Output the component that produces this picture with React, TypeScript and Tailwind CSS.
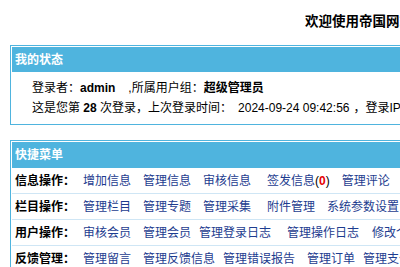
const FONT = "font-['Liberation_Sans','Noto_Sans_CJK_SC',sans-serif]";

type Link = { text: string; cls: string; badge?: boolean };

const MENU: { label: string; links: Link[] }[] = [
  {
    label: "信息操作：",
    links: [
      { text: "增加信息", cls: "" },
      { text: "管理信息", cls: "ml-[12px]" },
      { text: "审核信息", cls: "ml-[12px]" },
      { text: "签发信息", cls: "ml-[16px]", badge: true },
      { text: "管理评论", cls: "ml-[12px]" },
    ],
  },
  {
    label: "栏目操作：",
    links: [
      { text: "管理栏目", cls: "" },
      { text: "管理专题", cls: "ml-[12px]" },
      { text: "管理采集", cls: "ml-[12px]" },
      { text: "附件管理", cls: "ml-[16px]" },
      { text: "系统参数设置", cls: "ml-[12px]" },
    ],
  },
  {
    label: "用户操作：",
    links: [
      { text: "审核会员", cls: "" },
      { text: "管理会员", cls: "ml-[12px]" },
      { text: "管理登录日志", cls: "ml-[8px]" },
      { text: "管理操作日志", cls: "ml-[16px]" },
      { text: "修改个人资料", cls: "ml-[13px]" },
    ],
  },
  {
    label: "反馈管理：",
    links: [
      { text: "管理留言", cls: "" },
      { text: "管理反馈信息", cls: "ml-[12px]" },
      { text: "管理错误报告", cls: "ml-[8px]" },
      { text: "管理订单", cls: "ml-[12px]" },
      { text: "管理支付记录", cls: "ml-[8px]" },
    ],
  },
];

export default function App() {
  return (
    <div className={`w-screen h-screen overflow-hidden bg-white text-black ${FONT}`}>
      <div className="w-[980px]">
        <div className="pt-[14px] pl-[305px] text-[13.5px] leading-[16px] font-bold">
          欢迎使用帝国网站管理系统
        </div>

        {/* 我的状态 */}
        <div className="ml-[10px] mt-[15px] border border-[#4fb4de] p-px">
          <div className="h-[25px] bg-[#4fb4de] pl-[3px] flex items-center text-white font-bold text-[12px]">
            我的状态
          </div>
          <div className="pl-[20px] pt-[6px] pb-[5px] text-[12px] leading-[20px]">
            <div className="whitespace-nowrap">
              登录者：<b>admin</b>
              <span className="ml-[13px]">,所属用户组：</span>
              <b>超级管理员</b>
            </div>
            <div className="whitespace-nowrap">
              这是您第 <b>28</b> 次登录，上次登录时间：
              <span className="ml-[6px]">2024-09-24 09:42:56</span>
              <span className="ml-[4px]">，登录IP：127.0.0.1</span>
            </div>
          </div>
        </div>

        {/* 快捷菜单 */}
        <div className="ml-[10px] mt-[15px] border border-[#4fb4de] p-px">
          <div className="h-[26px] bg-[#4fb4de] pl-[3px] flex items-center text-white font-bold text-[12px]">
            快捷菜单
          </div>
          {MENU.map((row, i) => (
            <div
              key={row.label}
              className={`h-[26px] flex items-center pl-[3px] text-[12px] whitespace-nowrap ${
                i < MENU.length - 1 ? "border-b border-[#cfe6f5]" : ""
              }`}
            >
              <span className="w-[68px] font-bold">{row.label}</span>
              {row.links.map((l) => (
                <span key={l.text} className={l.cls}>
                  <a href="#" className="text-[#1d3c8f]">
                    {l.text}
                  </a>
                  {l.badge && (
                    <span>
                      (<b className="text-[#e60000]">0</b>)
                    </span>
                  )}
                </span>
              ))}
            </div>
          ))}
        </div>
      </div>
    </div>
  );
}
